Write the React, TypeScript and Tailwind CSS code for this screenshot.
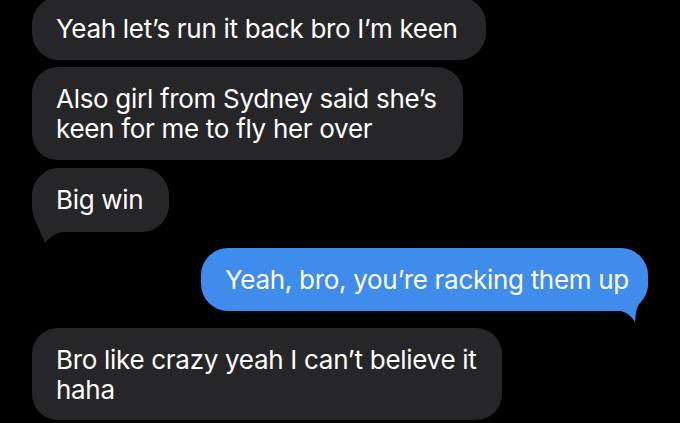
import React from "react";

const GRAY = "#262628";
const BLUE = "#3f8cec";

function GrayTail() {
  return (
    <svg
      className="absolute left-[-2px] bottom-[-13px]"
      width="32"
      height="40"
      viewBox="0 0 32 40"
    >
      <path d="M2 0 C2 14 10 24 15 38 C20 32 26 28 32 27 L32 0 Z" fill={GRAY} />
    </svg>
  );
}

function BlueTail() {
  return (
    <svg
      className="absolute right-[-2px] bottom-[-13px]"
      width="30"
      height="40"
      viewBox="0 0 30 40"
    >
      <path
        d="M0 0 L28 0 L28 1 C27 10 18 18 16 28 C15.5 32 15.5 35 15 38 C12 33 7 28 0 27 Z"
        fill={BLUE}
      />
    </svg>
  );
}

export default function App() {
  return (
    <div
      className="w-[680px] h-[423px] overflow-hidden bg-black text-white"
      style={{ fontFamily: "Inter, 'Noto Sans', sans-serif" }}
    >
      <div className="flex flex-col px-[32px] mt-[-3px] text-[26px] leading-[30px] tracking-[-0.3px]">
        <div className="relative w-[454px] rounded-[27px] bg-[#262628] pl-[24px] pt-[17px] pb-[16px] whitespace-nowrap">
          Yeah let’s run it back bro I’m keen
        </div>
        <div className="relative mt-[7px] w-[431px] rounded-[26px] bg-[#262628] pl-[24px] pt-[17px] pb-[16px] whitespace-nowrap">
          Also girl from Sydney said she’s
          <br />
          keen for me to fly her over
        </div>
        <div className="relative mt-[8px] w-[137px] rounded-[27px] bg-[#262628] pl-[24px] pt-[17px] pb-[17px] whitespace-nowrap">
          <GrayTail />
          <span className="relative z-10">Big win</span>
        </div>
        <div className="relative mt-[16px] ml-[169px] w-[447px] rounded-[27px] bg-[#3f8cec] pl-[24px] pt-[17px] pb-[16px] whitespace-nowrap">
          <BlueTail />
          <span className="relative z-10">Yeah, bro, you’re racking them up</span>
        </div>
        <div className="relative mt-[17px] w-[470px] rounded-[26px] bg-[#262628] pl-[24px] pt-[17px] pb-[15px] whitespace-nowrap">
          Bro like crazy yeah I can’t believe it
          <br />
          haha
        </div>
      </div>
    </div>
  );
}
